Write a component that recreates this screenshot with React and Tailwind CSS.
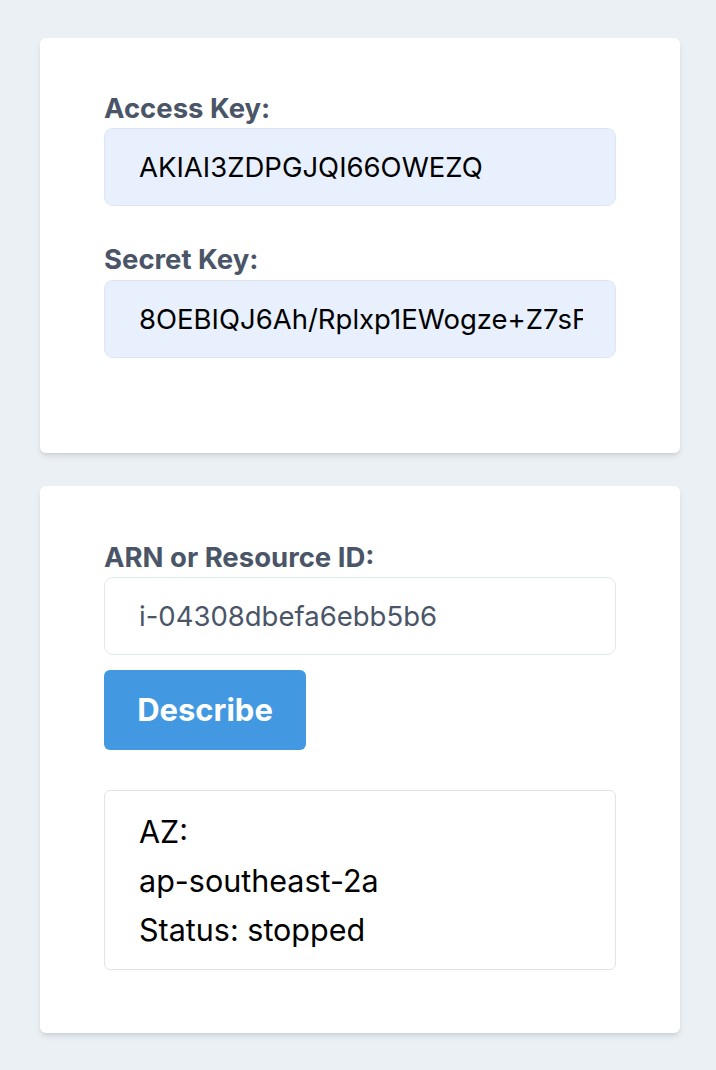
import { useState } from "react";

const Label = ({ children, className = "" }) => (
  <label className={`block text-[27.5px] leading-[36px] font-bold text-[#4a5568] ${className}`}>
    {children}
  </label>
);

const Field = ({ value, filled = false }) => (
  <input
    readOnly
    value={value}
    className={`block w-full h-[78px] rounded-[9px] border pl-[34px] pr-[32px] text-[27.5px] outline-none ${
      filled
        ? "bg-[#e8f0fe] border-[#dde5f0] text-black"
        : "bg-white border-[#e2e8f0] text-[#4a5568]"
    }`}
  />
);

export default function App() {
  const [resourceId] = useState("i-04308dbefa6ebb5b6");

  return (
    <div
      className="min-h-screen bg-[#ebf0f5] pl-[40px] pr-[36px] pt-[38px] pb-[37px] flex flex-col gap-[33px]"
      style={{ fontFamily: "Inter, 'Noto Sans', sans-serif" }}
    >
      {/* Credentials */}
      <div className="bg-white rounded-[6px] shadow-md px-[64px] pt-[52px] pb-[95px]">
        <Label className="mb-[2px]">Access Key:</Label>
        <Field filled value="AKIAI3ZDPGJQI66OWEZQ" />
        <Label className="mt-[35px] mb-[3px]">Secret Key:</Label>
        <Field filled value="8OEBIQJ6Ah/Rplxp1EWogze+Z7sFqK2vLmN0xT4" />
      </div>

      {/* Describe */}
      <div className="bg-white rounded-[6px] shadow-md px-[64px] pt-[53px] pb-[63px]">
        <Label className="mb-[2px]">ARN or Resource ID:</Label>
        <Field value={resourceId} />
        <button className="mt-[15px] w-[202px] h-[80px] rounded-[6px] bg-[#4299e1] text-white text-[31px] font-bold">
          Describe
        </button>
        <div className="mt-[40px] border border-[#dfe5ee] rounded-[6px] pl-[34px] pr-[32px] pt-[16px] pb-[15px] text-[30.5px] leading-[49px] text-black">
          <div>AZ:</div>
          <div>ap-southeast-2a</div>
          <div>Status: stopped</div>
        </div>
      </div>
    </div>
  );
}
